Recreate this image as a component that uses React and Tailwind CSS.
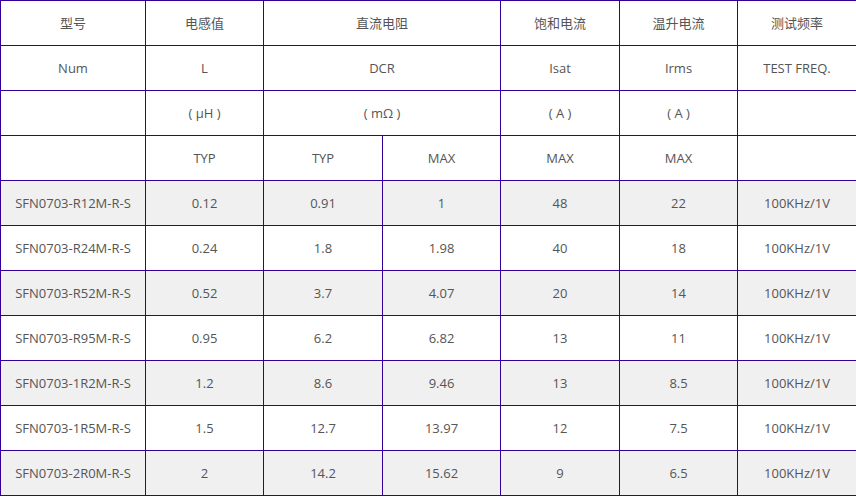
import React from "react";

const rows = [
  ["SFN0703-R12M-R-S", "0.12", "0.91", "1", "48", "22", "100KHz/1V"],
  ["SFN0703-R24M-R-S", "0.24", "1.8", "1.98", "40", "18", "100KHz/1V"],
  ["SFN0703-R52M-R-S", "0.52", "3.7", "4.07", "20", "14", "100KHz/1V"],
  ["SFN0703-R95M-R-S", "0.95", "6.2", "6.82", "13", "11", "100KHz/1V"],
  ["SFN0703-1R2M-R-S", "1.2", "8.6", "9.46", "13", "8.5", "100KHz/1V"],
  ["SFN0703-1R5M-R-S", "1.5", "12.7", "13.97", "12", "7.5", "100KHz/1V"],
  ["SFN0703-2R0M-R-S", "2", "14.2", "15.62", "9", "6.5", "100KHz/1V"],
];

const td = "border border-[#330099] text-center align-middle p-0 pt-[2px]";

export default function App() {
  return (
    <div className="bg-white w-[856px] h-[497px] overflow-hidden">
      <table
        className="border-collapse table-fixed w-[856px] text-[13px] text-[#555]"
        style={{ fontFamily: '"Open Sans", "Noto Sans CJK SC", sans-serif' }}
      >
        <colgroup>
          <col className="w-[145px]" />
          <col className="w-[118px]" />
          <col className="w-[119px]" />
          <col className="w-[118px]" />
          <col className="w-[119px]" />
          <col className="w-[118px]" />
          <col className="w-[119px]" />
        </colgroup>
        <tbody>
          <tr className="h-[45px]">
            <td className={td}>型号</td>
            <td className={td}>电感值</td>
            <td className={td} colSpan={2}>直流电阻</td>
            <td className={td}>饱和电流</td>
            <td className={td}>温升电流</td>
            <td className={td}>测试频率</td>
          </tr>
          <tr className="h-[45px]">
            <td className={td}>Num</td>
            <td className={td}>L</td>
            <td className={td} colSpan={2}>DCR</td>
            <td className={td}>Isat</td>
            <td className={td}>Irms</td>
            <td className={td}>TEST FREQ.</td>
          </tr>
          <tr className="h-[45px]">
            <td className={td}></td>
            <td className={td}>( μH )</td>
            <td className={td} colSpan={2}>( mΩ )</td>
            <td className={td}>( A )</td>
            <td className={td}>( A )</td>
            <td className={td}></td>
          </tr>
          <tr className="h-[45px]">
            <td className={td}></td>
            <td className={td}>TYP</td>
            <td className={td}>TYP</td>
            <td className={td}>MAX</td>
            <td className={td}>MAX</td>
            <td className={td}>MAX</td>
            <td className={td}></td>
          </tr>
          {rows.map((r, i) => (
            <tr key={i} className={i % 2 === 0 ? "h-[45px] bg-[#f0f0f0]" : "h-[45px] bg-white"}>
              {r.map((c, j) => (
                <td key={j} className={td}>{c}</td>
              ))}
            </tr>
          ))}
        </tbody>
      </table>
    </div>
  );
}
